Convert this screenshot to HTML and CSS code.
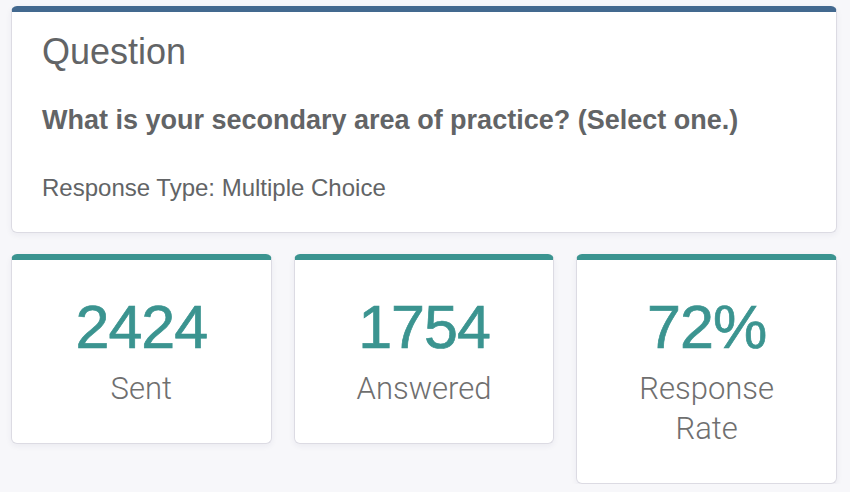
FILE: index.html
```html
<!DOCTYPE html>
<html lang="en">
<head>
    <meta charset="UTF-8">
    <meta name="viewport" content="width=device-width, initial-scale=1.0">
    <title>Question Summary</title>
    <link rel="stylesheet" href="styles.css">
</head>
<body>

<div class="page">
    <!-- Question card -->
    <div class="card question-card">
        <div class="q-heading">Question</div>
        <div class="q-text">What is your secondary area of practice? (Select one.)</div>
        <div class="q-type">Response Type: Multiple Choice</div>
    </div>

    <!-- Stats -->
    <div class="stats">
        <div class="card stat-card">
            <div class="stat-value">2424</div>
            <div class="stat-label">Sent</div>
        </div>
        <div class="card stat-card">
            <div class="stat-value">1754</div>
            <div class="stat-label">Answered</div>
        </div>
        <div class="card stat-card">
            <div class="stat-value">72%</div>
            <div class="stat-label">Response<br>Rate</div>
        </div>
    </div>
</div>

</body>
</html>
```

FILE: styles.css
```css
* {
    margin: 0;
    padding: 0;
    box-sizing: border-box;
}
body {
    font-family: "Liberation Sans", Arial, sans-serif;
    background-color: #f7f7fa;
    color: #626466;
}
.page {
    width: 826px;
    margin: 6px 0 0 11px;
}
.card {
    background-color: white;
    border: 1px solid #dcdbe3;
    border-radius: 6px;
    box-shadow: 0 2px 6px rgba(40, 40, 80, 0.06);
}
.question-card {
    border-top: 6px solid #43698f;
    padding: 18px 30px 30px 30px;
}
.q-heading {
    font-size: 36px;
    line-height: 43px;
}
.q-text {
    font-size: 27px;
    font-weight: bold;
    line-height: 32px;
    margin-top: 31px;
}
.q-type {
    font-size: 24px;
    line-height: 29px;
    margin-top: 37px;
}
.stats {
    display: grid;
    grid-template-columns: repeat(3, 1fr);
    gap: 22px;
    margin-top: 21px;
    align-items: start;
}
.stat-card {
    border-top: 6px solid #3b9490;
    padding: 31px 10px 34px 10px;
    text-align: center;
}
.stat-value {
    font-size: 61px;
    line-height: 72px;
    color: #3b9490;
    letter-spacing: -1px;
    -webkit-text-stroke: 0.7px #3b9490;
}
.stat-label {
    font-family: Roboto, "Liberation Sans", sans-serif;
    font-weight: 300;
    font-size: 31px;
    line-height: 40px;
    margin-top: 6px;
    color: #6f6f6f;
}
```
